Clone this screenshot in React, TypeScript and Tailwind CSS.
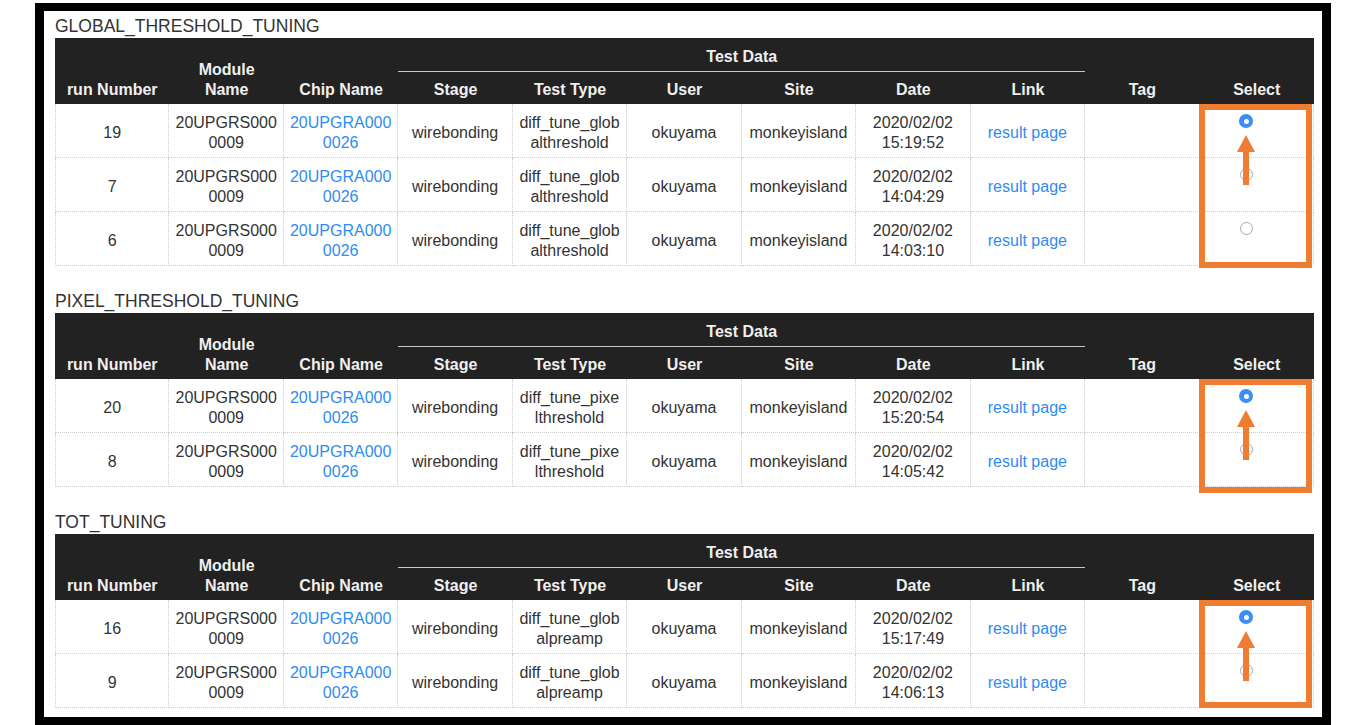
import React from "react";

type Row = {
  run: string;
  time: string;
  t1: string;
  t2: string;
  selected: boolean;
};

type Section = {
  title: string;
  rows: Row[];
  boxBottom: string;
};

const sections: Section[] = [
  {
    title: "GLOBAL_THRESHOLD_TUNING",
    boxBottom: "bottom-[-2px]",
    rows: [
      { run: "19", time: "15:19:52", t1: "diff_tune_glob", t2: "althreshold", selected: true },
      { run: "7", time: "14:04:29", t1: "diff_tune_glob", t2: "althreshold", selected: false },
      { run: "6", time: "14:03:10", t1: "diff_tune_glob", t2: "althreshold", selected: false },
    ],
  },
  {
    title: "PIXEL_THRESHOLD_TUNING",
    boxBottom: "bottom-[-6px]",
    rows: [
      { run: "20", time: "15:20:54", t1: "diff_tune_pixe", t2: "lthreshold", selected: true },
      { run: "8", time: "14:05:42", t1: "diff_tune_pixe", t2: "lthreshold", selected: false },
    ],
  },
  {
    title: "TOT_TUNING",
    boxBottom: "bottom-0",
    rows: [
      { run: "16", time: "15:17:49", t1: "diff_tune_glob", t2: "alpreamp", selected: true },
      { run: "9", time: "14:06:13", t1: "diff_tune_glob", t2: "alpreamp", selected: false },
    ],
  },
];

const cell =
  "flex items-center justify-center text-center leading-[20px] px-[6px] pt-[5px] border-r border-b border-dotted border-[#cdcdcd]";

function Header() {
  const span2 =
    "row-span-2 flex flex-col justify-end items-center text-center leading-[20px] pb-[4px]";
  const sub = "row-start-2 flex items-center justify-center leading-[20px] pt-[4px]";
  return (
    <div className="grid grid-cols-11 grid-rows-[34px_32px] h-[66px] bg-[#222222] text-[#efefef] font-bold text-[16px]">
      <div className={`${span2} col-start-1 row-start-1`}>run Number</div>
      <div className={`${span2} col-start-2 row-start-1`}>
        <span>Module</span>
        <span>Name</span>
      </div>
      <div className={`${span2} col-start-3 row-start-1`}>Chip Name</div>
      <div className="col-start-4 col-span-6 row-start-1 flex items-center justify-center border-b border-[#c8c8c8] pt-[4px]">
        Test Data
      </div>
      <div className={`${span2} col-start-10 row-start-1`}>Tag</div>
      <div className={`${span2} col-start-11 row-start-1`}>Select</div>
      <div className={`${sub} col-start-4`}>Stage</div>
      <div className={`${sub} col-start-5`}>Test Type</div>
      <div className={`${sub} col-start-6`}>User</div>
      <div className={`${sub} col-start-7`}>Site</div>
      <div className={`${sub} col-start-8`}>Date</div>
      <div className={`${sub} col-start-9`}>Link</div>
    </div>
  );
}

function Radio({ selected }: { selected: boolean }) {
  if (selected) {
    return (
      <div className="w-[14px] h-[14px] rounded-full bg-[#3a8ef5] flex items-center justify-center">
        <div className="w-[5px] h-[5px] rounded-full bg-white" />
      </div>
    );
  }
  return <div className="w-[13px] h-[13px] rounded-full border border-[#a8a8a8] bg-white" />;
}

function Arrow() {
  return (
    <svg
      className="absolute left-[1182px] top-[31px]"
      width="18"
      height="50"
      viewBox="0 0 18 50"
    >
      <polygon points="9,0 18,17 0,17" fill="#ee7d31" />
      <rect x="6" y="16" width="6" height="34" fill="#ee7d31" />
    </svg>
  );
}

function DataRow({ r }: { r: Row }) {
  return (
    <div className="grid grid-cols-11 h-[54px] text-[16px] text-[#333333]">
      <div className={`${cell} border-l`}>{r.run}</div>
      <div className={cell}>
        <span>
          20UPGRS000
          <br />
          0009
        </span>
      </div>
      <div className={`${cell} text-[#2f8cf2]`}>
        <span>
          20UPGRA000
          <br />
          0026
        </span>
      </div>
      <div className={cell}>wirebonding</div>
      <div className={cell}>
        <span>
          {r.t1}
          <br />
          {r.t2}
        </span>
      </div>
      <div className={cell}>okuyama</div>
      <div className={cell}>monkeyisland</div>
      <div className={cell}>
        <span>
          2020/02/02
          <br />
          {r.time}
        </span>
      </div>
      <div className={`${cell} text-[#2f8cf2]`}>result page</div>
      <div className={cell}></div>
      <div className="flex justify-center items-start pt-[10px] pr-[20px] border-r border-b border-dotted border-[#cdcdcd]">
        <Radio selected={r.selected} />
      </div>
    </div>
  );
}

function TableSection({ s, first }: { s: Section; first: boolean }) {
  return (
    <div className={first ? "" : "mt-[24px]"}>
      <div className="text-[17.5px] leading-[20px] pt-[1px] mb-[2px] text-[#333333]">{s.title}</div>
      <Header />
      <div className="relative">
        {s.rows.map((r, i) => (
          <DataRow key={i} r={r} />
        ))}
        <div
          className={`absolute top-0 right-[2px] w-[113px] ${s.boxBottom} border-[6px] border-[#ee7d31] pointer-events-none`}
        />
        <Arrow />
      </div>
    </div>
  );
}

export default function App() {
  return (
    <div className="w-[1364px] h-[725px] overflow-hidden bg-white pl-[35px] pr-[33px] pt-[3px] font-['Liberation_Sans',Arial,sans-serif]">
      <div className="border-[9px] border-t-[8px] border-black bg-white pl-[11px] pr-[8px] pt-[4px] pb-[9px]">
        {sections.map((s, i) => (
          <TableSection key={s.title} s={s} first={i === 0} />
        ))}
      </div>
    </div>
  );
}
